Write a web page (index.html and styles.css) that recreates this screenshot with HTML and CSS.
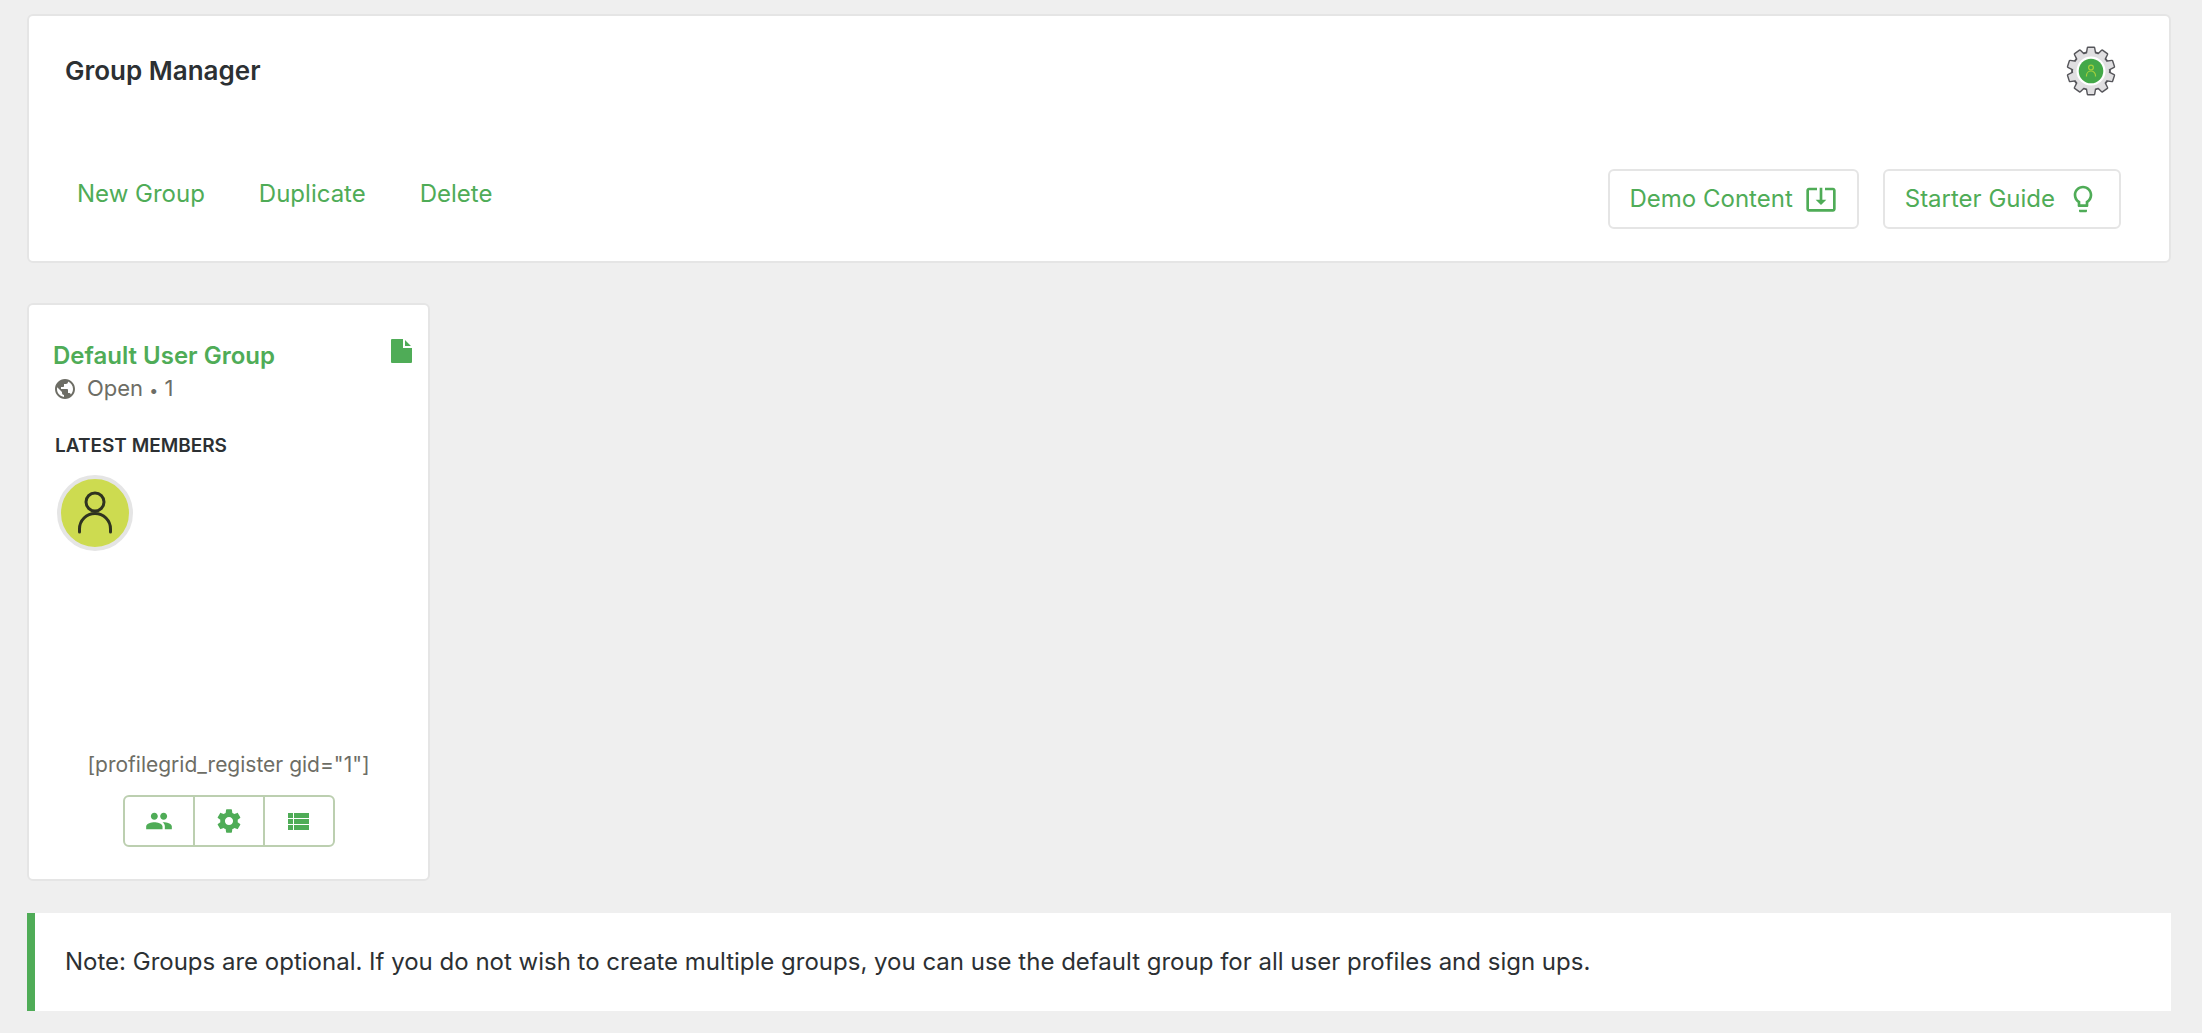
FILE: index.html
```html
<!DOCTYPE html>
<html lang="en">
<head>
  <meta charset="UTF-8">
  <meta name="viewport" content="width=device-width, initial-scale=1.0">
  <title>Group Manager</title>
  <link rel="stylesheet" href="styles.css">
</head>
<body>

<main class="manager">
  <header class="panel">
    <div class="panel-top">
      <h1>Group Manager</h1>
      <a class="settings-link" href="#" aria-label="Global settings">
        <svg viewBox="0 0 50 50" width="50" height="50">
          <defs>
            <path id="tooth" d="M21 8 L22 2 H28 L29 8 Z"/>
            <g id="teeth">
              <use href="#tooth"/>
              <use href="#tooth" transform="rotate(36 25 25)"/>
              <use href="#tooth" transform="rotate(72 25 25)"/>
              <use href="#tooth" transform="rotate(108 25 25)"/>
              <use href="#tooth" transform="rotate(144 25 25)"/>
              <use href="#tooth" transform="rotate(180 25 25)"/>
              <use href="#tooth" transform="rotate(216 25 25)"/>
              <use href="#tooth" transform="rotate(252 25 25)"/>
              <use href="#tooth" transform="rotate(288 25 25)"/>
              <use href="#tooth" transform="rotate(324 25 25)"/>
            </g>
          </defs>
          <g fill="#e0dfe1" stroke="#55555a" stroke-width="2.8" stroke-linejoin="round">
            <use href="#teeth"/>
            <circle cx="25" cy="25" r="18.5"/>
          </g>
          <g fill="#e0dfe1">
            <use href="#teeth"/>
            <circle cx="25" cy="25" r="18"/>
          </g>
          <circle cx="25" cy="25" r="14.5" fill="#fff"/>
          <circle cx="25" cy="25" r="12.3" fill="#43a848"/>
          <g fill="none" stroke="#a5cf3c" stroke-width="1.2">
            <circle cx="25" cy="21.6" r="2.4"/>
            <path d="M20.5 30.5v-1a4.5 4.5 0 0 1 9 0v1"/>
          </g>
        </svg>
      </a>
    </div>

    <div class="panel-bottom">
      <nav class="actions">
        <a href="#">New Group</a>
        <a href="#">Duplicate</a>
        <a href="#">Delete</a>
      </nav>
      <div class="buttons">
        <button type="button" class="btn">
          Demo Content
          <svg viewBox="0 0 24 24" width="32" height="32" fill="currentColor"><path d="M12 16.5l4-4h-3v-9h-2v9H8l4 4zm9-13h-6v1.99h6v14.03H3V5.49h6V3.5H3c-1.1 0-2 .9-2 2v14c0 1.1.9 2 2 2h18c1.1 0 2-.9 2-2v-14c0-1.1-.9-2-2-2z"/></svg>
        </button>
        <button type="button" class="btn">
          Starter Guide
          <svg viewBox="0 0 24 24" width="32" height="32" fill="currentColor"><path d="M9 21c0 .55.45 1 1 1h4c.55 0 1-.45 1-1v-1H9v1zm3-19C8.14 2 5 5.14 5 9c0 2.38 1.19 4.47 3 5.74V17c0 .55.45 1 1 1h6c.55 0 1-.45 1-1v-2.26c1.81-1.27 3-3.36 3-5.74 0-3.86-3.14-7-7-7zm2.85 11.1l-.85.6V16h-4v-2.3l-.85-.6C7.8 12.16 7 10.63 7 9c0-2.76 2.24-5 5-5s5 2.24 5 5c0 1.63-.8 3.16-2.15 4.1z"/></svg>
        </button>
      </div>
    </div>
  </header>

  <section class="cards">
    <article class="card">
      <div class="card-head">
        <h2><a href="#">Default User Group</a></h2>
        <svg class="card-page" viewBox="0 0 21 24" width="21" height="24" fill="currentColor"><path d="M0 1a1 1 0 0 1 1-1h11v9h9v14a1 1 0 0 1-1 1H1a1 1 0 0 1-1-1zM14 1l6 6h-6z"/></svg>
      </div>
      <div class="card-meta">
        <svg viewBox="0 0 24 24" width="24" height="24" fill="currentColor"><path d="M12 2C6.48 2 2 6.48 2 12s4.480 10 10 10 10-4.480 10-10S17.520 2 12 2zm-1 17.930c-3.950-.49-7-3.850-7-7.930 0-.62.08-1.210.21-1.790L9 15v1c0 1.100.9 2 2 2v1.930zm6.900-2.540c-.26-.81-1-1.390-1.900-1.390h-1v-3c0-.55-.45-1-1-1H8v-2h2c.55 0 1-.45 1-1V7h2c1.100 0 2-.9 2-2v-.41c2.930 1.190 5 4.060 5 7.410 0 2.080-.8 3.970-2.100 5.390z"/></svg>
        <span>Open <span class="dot">•</span> 1</span>
      </div>
      <h3>LATEST MEMBERS</h3>
      <div class="avatar">
        <svg viewBox="0 0 68 68" width="68" height="68" fill="none" stroke="#2f3320" stroke-width="3" stroke-linecap="round">
          <circle cx="34" cy="23" r="9"/>
          <path d="M18.500 53v-3a15.500 15.500 0 0 1 31 0v3"/>
        </svg>
      </div>
      <div class="shortcode">[profilegrid_register gid="1"]</div>
      <div class="card-tools">
        <button type="button" aria-label="Members">
          <svg viewBox="0 0 24 24" width="28" height="28" fill="currentColor"><path d="M16 11c1.660 0 2.990-1.340 2.990-3S17.660 5 16 5c-1.660 0-3 1.340-3 3s1.340 3 3 3zm-8 0c1.660 0 2.990-1.340 2.990-3S9.660 5 8 5C6.340 5 5 6.340 5 8s1.340 3 3 3zm0 2c-2.330 0-7 1.170-7 3.500V19h14v-2.500c0-2.330-4.670-3.500-7-3.500zm8 0c-.29 0-.62.02-.97.05 1.160.84 1.970 1.970 1.970 3.450V19h6v-2.500c0-2.330-4.670-3.500-7-3.500z"/></svg>
        </button>
        <button type="button" aria-label="Settings">
          <svg viewBox="0 0 24 24" width="28" height="28" fill="currentColor"><path d="M19.430 12.980c.04-.32.07-.64.07-.98s-.03-.66-.07-.98l2.110-1.650c.19-.15.24-.42.12-.64l-2-3.460c-.12-.22-.39-.3-.61-.22l-2.490 1c-.52-.4-1.080-.73-1.690-.98l-.38-2.650C14.460 2.180 14.250 2 14 2h-4c-.25 0-.46.18-.49.42l-.38 2.650c-.61.25-1.170.59-1.690.98l-2.490-1c-.23-.09-.49 0-.61.22l-2 3.460c-.13.22-.07.49.12.64l2.110 1.650c-.04.32-.07.65-.07.98s.03.66.07.98l-2.110 1.650c-.19.15-.24.42-.12.64l2 3.460c.12.22.39.3.61.22l2.490-1c.52.4 1.080.73 1.690.98l.38 2.650c.03.24.24.42.49.42h4c.25 0 .46-.18.49-.42l.38-2.650c.61-.25 1.170-.59 1.690-.98l2.490 1c.23.09.49 0 .61-.22l2-3.460c.12-.22.07-.49-.12-.64l-2.110-1.650zM12 15.500c-1.930 0-3.500-1.570-3.500-3.500s1.570-3.500 3.500-3.500 3.500 1.570 3.500 3.500-1.570 3.500-3.500 3.500z"/></svg>
        </button>
        <button type="button" aria-label="Fields">
          <svg viewBox="0 0 21 17" width="21" height="17" fill="currentColor"><path d="M0 0h5v5H0zM6 0h15v5H6zM0 6h5v5H0zM6 6h15v5H6zM0 12h5v5H0zM6 12h15v5H6z"/></svg>
        </button>
      </div>
    </article>
  </section>

  <p class="note">Note: Groups are optional. If you do not wish to create multiple groups, you can use the default group for all user profiles and sign ups.</p>
</main>

</body>
</html>
```
FILE: styles.css
```css
* {
  box-sizing: border-box;
}
body {
  margin: 0;
  padding: 14px 31px 20px 27px;
  background-color: #efefef;
  color: #2c3033;
  font-family: Inter, "Liberation Sans", sans-serif;
  font-size: 24px;
  line-height: 32px;
}
h1, h2, h3, p {
  margin: 0;
}
a {
  color: #4fac57;
  text-decoration: none;
}
svg {
  display: block;
  flex: none;
}
.panel {
  padding: 30px 48px 32px 36px;
  background-color: #fff;
  border: 2px solid #e5e5e5;
  border-radius: 6px;
}
.panel-top {
  display: flex;
  justify-content: space-between;
  align-items: center;
  padding-right: 5px;
}
h1 {
  font-size: 26px;
  font-weight: 600;
}
.panel-bottom {
  display: flex;
  justify-content: space-between;
  align-items: flex-start;
  margin-top: 73px;
}
.actions {
  display: flex;
  gap: 54px;
  padding: 9px 12px;
}
.buttons {
  display: flex;
  gap: 24px;
}
.btn {
  display: flex;
  align-items: center;
  gap: 12px;
  height: 60px;
  padding: 0 20px;
  background-color: #fff;
  border: 2px solid #e5e5e5;
  border-radius: 6px;
  color: #4fac57;
  font: inherit;
}
.cards {
  display: flex;
  flex-wrap: wrap;
  gap: 32px;
  margin: 40px 0 32px;
}
.card {
  display: flex;
  flex-direction: column;
  width: 403px;
  min-height: 578px;
  padding: 34px 24px 32px;
  background-color: #fff;
  border: 2px solid #e5e5e5;
  border-radius: 6px;
}
.card-head {
  display: flex;
  justify-content: space-between;
  margin-right: -8px;
  color: #4fac57;
}
.card-head h2 {
  padding-top: 1px;
  font-size: 24px;
  font-weight: 600;
}
.card-meta {
  display: flex;
  align-items: center;
  gap: 10px;
  color: #6d6d65;
  font-size: 22px;
}
.card-meta .dot {
  font-size: 16px;
}
h3 {
  margin-top: 24px;
  padding-left: 2px;
  font-size: 19px;
  font-weight: 600;
}
.avatar {
  width: 76px;
  height: 76px;
  margin: 13px 0 0 4px;
  background-color: #cddb50;
  border: 4px solid #e5e5e5;
  border-radius: 50%;
}
.shortcode {
  margin-top: auto;
  color: #6d6d65;
  font-size: 21px;
  text-align: center;
}
.card-tools {
  display: flex;
  align-self: center;
  width: 212px;
  margin-top: 14px;
  border: 2px solid #bccfb0;
  border-radius: 6px;
}
.card-tools button {
  display: flex;
  flex: 1;
  justify-content: center;
  align-items: center;
  height: 48px;
  padding: 0;
  background: none;
  border: 0;
  color: #4fac57;
}
.card-tools button + button {
  border-left: 2px solid #bccfb0;
}
.note {
  padding: 33px 30px;
  background-color: #fff;
  border-left: 8px solid #4fac57;
}
```
